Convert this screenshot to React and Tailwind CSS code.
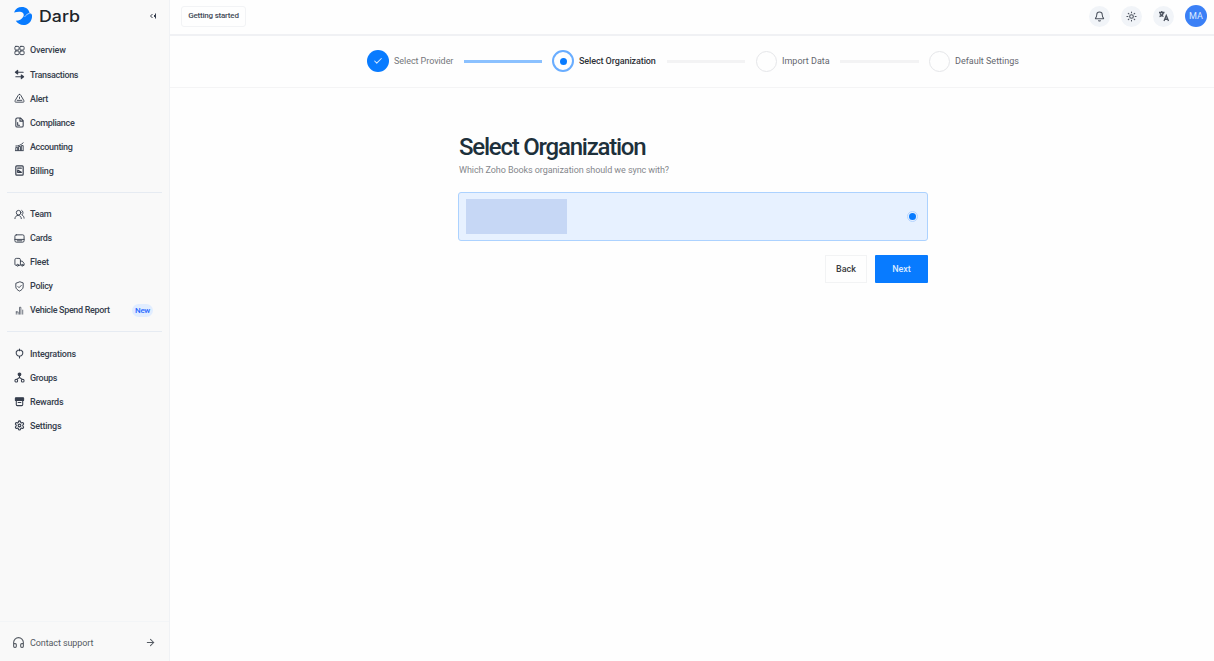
import React from "react";
import { Headphones, ArrowRight, Bell, Sun, Check, Settings } from "lucide-react";

function Glyph({ children, w = 2 }) {
  return (
    <svg viewBox="0 0 24 24" className="size-[11px] shrink-0" fill="none" stroke="currentColor" strokeWidth={w} strokeLinecap="round" strokeLinejoin="round">
      {children}
    </svg>
  );
}

const icons = {
  overview: <Glyph><rect x="2" y="3" width="9" height="8" rx="2" /><rect x="13" y="3" width="9" height="8" rx="2" /><rect x="2" y="13" width="9" height="8" rx="2" /><rect x="13" y="13" width="9" height="8" rx="2" /></Glyph>,
  transactions: <Glyph w={2.4}><path d="M20 7H4M8 3v8L3 7zM4 17h16M16 13v8l5-4z" /></Glyph>,
  alert: <Glyph><path d="M12 3c-1.500 0-2.300 1-3 2.300L2.500 16.500C1.400 18.500 2.200 20 4.700 20h14.600c2.500 0 3.300-1.500 2.200-3.500L15 5.300C14.300 4 13.500 3 12 3zM7 16h10M12 9v3" /></Glyph>,
  compliance: <Glyph w={2.3}><path d="M14 2H7a3 3 0 0 0-3 3v14a3 3 0 0 0 3 3h10a3 3 0 0 0 3-3V8zM13 3v6h6M8 12v6h4" /></Glyph>,
  accounting: <Glyph w={2}><path d="M3 21h17M4 20v-6h4v6M10 20v-8h4v8M16 20V10h4v10M4 11c6 0 11-2 16-7" /></Glyph>,
  billing: <Glyph w={2.6}><rect x="4" y="2" width="16" height="20" rx="2" /><path d="M8 7h8M8 11l8 5M8 12v4h7" /></Glyph>,
  team: <Glyph><circle cx="10" cy="8" r="5" /><path d="M2 21c0-4 3-7 7-7s7 3 7 7M17 3c3 1 4 7 0 10 3 1 5 4 5 7" /></Glyph>,
  cards: <Glyph><rect x="2" y="4" width="20" height="16" rx="3" /><path d="M2 14h20M7 17h10" /></Glyph>,
  fleet: <Glyph><path d="M6 18H4a2 2 0 0 1-2-2V6a3 3 0 0 1 3-3h6a3 3 0 0 1 3 3v12h-4M14 9h4l4 5v4h-2" /><circle cx="8" cy="18" r="2" /><circle cx="18" cy="18" r="2" /></Glyph>,
  policy: <Glyph><path d="M12 2 4 5v8c0 4 4 7 8 9 4-2 8-5 8-9V5zM8.500 12l2.500 2.500 5-5" /></Glyph>,
  report: <Glyph w={1.5}><path d="M5 20v-5M9 20v-5H5M12 20V5h3v15M19 20v-9" /></Glyph>,
  integrations: <Glyph w={2.300}><path d="M12 2v4M8 5h8M7 6c-4 3-3 11 5 12 8-1 9-9 5-12M12 18v4" /></Glyph>,
  groups: <Glyph w={2.300}><circle cx="12" cy="5" r="3" fill="currentColor" /><circle cx="5" cy="19" r="3" /><circle cx="19" cy="19" r="3" /><path d="M12 8v4l-6 4M12 12l6 4" /></Glyph>,
  rewards: <Glyph w={2.300}><rect x="3" y="4" width="18" height="6" rx="1" fill="currentColor" /><path d="M5 10v9a2 2 0 0 0 2 2h10a2 2 0 0 0 2-2v-9M9 14h6" /></Glyph>,
  settings: <Settings className="size-[11px] shrink-0" strokeWidth={2.400} />,
};

const groups = [
  [
    ["overview", "Overview", "tracking-[-0.15px]"],
    ["transactions", "Transactions", "tracking-[-0.35px]"],
    ["alert", "Alert", "tracking-[-0.3px]"],
    ["compliance", "Compliance", "tracking-[-0.35px]"],
    ["accounting", "Accounting", "tracking-[-0.35px]"],
    ["billing", "Billing", "tracking-[-0.2px]"],
  ],
  [
    ["team", "Team", "tracking-[-0.3px]"],
    ["cards", "Cards", "tracking-[-0.35px]"],
    ["fleet", "Fleet", "tracking-[-0.2px]"],
    ["policy", "Policy", "tracking-[-0.3px]"],
    ["report", "Vehicle Spend Report", "tracking-[-0.34px]"],
  ],
  [
    ["integrations", "Integrations", "tracking-[-0.2px]"],
    ["groups", "Groups", "tracking-[-0.3px]"],
    ["rewards", "Rewards", "tracking-[-0.2px]"],
    ["settings", "Settings", "tracking-[-0.25px]"],
  ],
];

function Logo() {
  return (
    <svg viewBox="0 0 18 18" className="h-[18px] w-[18px]" fill="#087bff">
      <path d="M0 5.500C1.500 1.800 4.300 0 7.700 0c4.500 0 7.500 2.600 7.900 6.300 1.400.2 2.200.7 2.400 2C18.500 13.500 14.800 18 9.600 18c-3.400 0-6.200-1.500-7.800-4.200 3.700-.1 5.800-1.400 7.300-3.700 1-1.700.9-3.300-.4-4.300C7 4.400 4.300 4.400 0 5.500z" />
      <path d="M15.600 6.300c-2.400.5-3.700 2.100-5 3.500" fill="none" stroke="#f9f9f9" strokeWidth="0.7" />
    </svg>
  );
}

function Sidebar() {
  return (
    <aside className="flex w-[170px] shrink-0 flex-col border-r border-[#f0f2f5] bg-[#f9f9f9] text-[#363e4d]">
      <div className="flex h-[38.4px] items-center pb-[6.4px] pl-[14px] pr-[12px]">
        <Logo />
        <span className="ml-[7px] origin-left scale-x-[1.11] font-['Inter',sans-serif] text-[16px] font-medium leading-none text-[#20242a]">Darb</span>
        <svg viewBox="0 0 8 8" className="ml-auto size-[8px]" fill="none" stroke="currentColor" strokeWidth="1">
          <path d="M3.500 2 1.500 4l2 2M6.500 1.500v5M6.500 2.500 5 4l1.500 1.500" />
        </svg>
      </div>
      <nav className="flex flex-col">
        {groups.map((group, i) => (
          <div key={i} className={i === 0 ? "pb-[8.6px]" : "mx-[7px] border-t border-[#e6ebf2] pb-[8.500px] pt-[9.500px]"}>
            {group.map(([icon, label, tracking]) => (
              <div key={label} className={"flex h-[24.1px] items-center " + (i === 0 ? "pl-[14px]" : "pl-[7px]")}>
                {icons[icon]}
                <span className={"ml-[5px] whitespace-nowrap pt-[1px] text-[9px] font-medium leading-none " + tracking}>{label}</span>
                {icon === "report" && (
                  <span className="ml-auto mr-[9px] flex h-[13px] w-[21px] items-center justify-center rounded-full bg-[#e1edff] pt-[1px] text-[8px] font-medium leading-none tracking-[-0.3px] text-[#2868ff]">New</span>
                )}
              </div>
            ))}
          </div>
        ))}
      </nav>
      <div className="mt-auto flex h-[40px] items-center border-t border-[#f3f5f7] pl-[12px] pr-[13px] pt-[1px] text-[#555b63]">
        <Headphones className="size-[13px]" strokeWidth={2} />
        <span className="ml-[5px] whitespace-nowrap pt-[2px] text-[9px] leading-none tracking-[-0.1px]">Contact support</span>
        <ArrowRight className="ml-auto size-[11px]" strokeWidth={2.200} />
      </div>
    </aside>
  );
}

function RoundButton({ children }) {
  return <div className="flex size-[21px] items-center justify-center rounded-full bg-[#f1f4f8] text-[#4b525e]">{children}</div>;
}

function TopBar() {
  return (
    <header className="flex h-[36px] shrink-0 items-center justify-between border-b-2 border-[#f0f1f4] pb-[2px] pl-[11px] pr-[7px]">
      <div className="flex h-[21px] w-[65px] items-center justify-center rounded-[3px] border border-[#f2f3f5] text-[8px] font-medium leading-none tracking-[-0.22px] text-[#434b58] whitespace-nowrap">Getting started</div>
      <div className="flex items-center gap-[11px]">
        <RoundButton><Bell className="size-[11px]" strokeWidth={2.200} /></RoundButton>
        <RoundButton><Sun className="size-[11px]" strokeWidth={2.300} /></RoundButton>
        <RoundButton>
          <svg viewBox="0 0 24 24" className="size-[12px]" fill="none" stroke="currentColor" strokeWidth="2.600">
            <path d="M2 5h11M7.500 2v3M11 5c-1 4-4 7-8 8M4 7c1 3 4 5 7 6M12 22l4.500-11L21 22M13.500 18.500h6" />
          </svg>
        </RoundButton>
        <div className="flex size-[22px] items-center justify-center rounded-full bg-[#3b80f6] text-[9px] leading-none text-[#dce9ff]">MA</div>
      </div>
    </header>
  );
}

function Stepper() {
  const future = "size-[21px] rounded-full border border-[#e5e6e9]";
  const label = "whitespace-nowrap pt-[1px] text-[9px] leading-none";
  return (
    <div className="flex h-[52px] shrink-0 items-center border-b border-[#f4f4f5] pl-[197px] pb-[1px]">
      <div className="flex w-[97px] items-center gap-[5px]">
        <div className="flex size-[22px] shrink-0 items-center justify-center rounded-full bg-[#087bff]"><Check className="size-[10px] text-[#d8eaff]" strokeWidth={2.500} /></div>
        <span className={label + " tracking-[-0.05px] text-[#75777c]"}>Select Provider</span>
      </div>
      <div className="h-[3px] w-[78px] bg-[#8bc1ff]" />
      <div className="ml-[10px] flex w-[115px] items-center gap-[5px]">
        <div className="flex size-[22px] shrink-0 items-center justify-center rounded-full border-2 border-[#69adff]"><div className="size-[7px] rounded-full bg-[#087bff]" /></div>
        <span className={label + " font-medium tracking-[-0.1px] text-[#303238]"}>Select Organization</span>
      </div>
      <div className="h-[3px] w-[78px] bg-[#f3f3f4]" />
      <div className="ml-[11px] flex w-[84px] items-center gap-[5px]">
        <div className={future} />
        <span className={label + " text-[#65676e]"}>Import Data</span>
      </div>
      <div className="h-[3px] w-[79px] bg-[#f3f3f4]" />
      <div className="ml-[10px] flex items-center gap-[5px]">
        <div className={future} />
        <span className={label + " text-[#65676e]"}>Default Settings</span>
      </div>
    </div>
  );
}

export default function App() {
  return (
    <div className="flex h-[661px] w-[1214px] overflow-hidden bg-[#fefefe] font-['Roboto','Liberation_Sans',sans-serif]">
      <Sidebar />
      <div className="flex min-w-0 flex-1 flex-col">
        <TopBar />
        <Stepper />
        <main className="ml-[288px] w-[470px] pt-[45px]">
          <h1 className="whitespace-nowrap pl-[1px] text-[24px] font-medium leading-[28px] tracking-[-1.23px] text-[#1d303b]">Select Organization</h1>
          <p className="whitespace-nowrap pl-[1px] text-[9px] leading-[18px] tracking-[-0.08px] text-[#85878c]">Which Zoho Books organization should we sync with?</p>
          <div className="mt-[13px] flex h-[49px] items-center justify-between rounded-[3px] border-[1.5px] border-[#acd2ff] bg-[#e7f1ff] pb-[1px] pl-[7px] pr-[9px]">
            <div className="h-[35px] w-[101px] bg-[#c6d7f5]" />
            <div className="flex size-[11px] items-center justify-center rounded-full border border-[#b5d5ff]"><div className="size-[7px] rounded-full bg-[#087bff]" /></div>
          </div>
          <div className="mt-[14px] flex justify-end gap-[8px]">
            <button className="h-[28px] w-[42px] border border-[#f2f3f4] pt-[1px] text-[9px] font-medium leading-none text-[#3b3d42]">Back</button>
            <button className="h-[28px] w-[53px] rounded-[1px] bg-[#087bff] pt-[1px] text-[9px] font-medium leading-none text-[#d8eaff]">Next</button>
          </div>
        </main>
      </div>
    </div>
  );
}
